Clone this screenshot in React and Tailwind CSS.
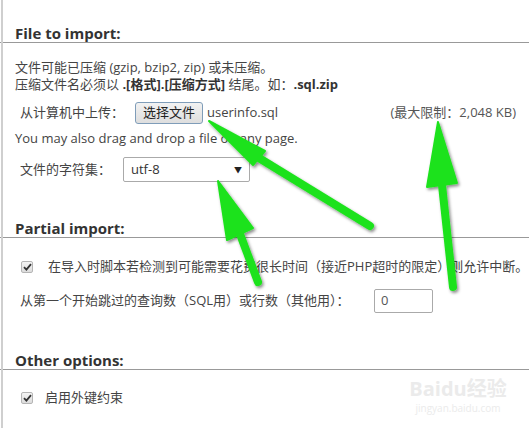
import React from 'react';

const font = { fontFamily: '"Open Sans", "Noto Sans CJK SC", sans-serif' };

const Heading = ({ children, className = '' }) => (
  <div className={`text-[15px] leading-[17px] font-bold text-[#333] border-b border-[#999] pl-[15px] ${className}`}>
    {children}
  </div>
);

const Check = () => (
  <span className="w-[12px] h-[12px] border border-[#b5b5b5] rounded-[2px] bg-gradient-to-b from-[#f4f4f4] to-[#dcdcdc] flex items-center justify-center shrink-0">
    <svg width="9" height="8" viewBox="0 0 9 8">
      <path d="M1 4.2 L3.4 6.6 L8 1.2" fill="none" stroke="#333" strokeWidth="1.8" />
    </svg>
  </span>
);

const Arrow = ({ tip, left, right, end }) => {
  const base = [(left[0] + right[0]) / 2, (left[1] + right[1]) / 2];
  return (
    <g>
      <line x1={base[0]} y1={base[1]} x2={end[0]} y2={end[1]} stroke="#1de21d" strokeWidth="8" strokeLinecap="round" />
      <polygon
        points={`${tip[0]},${tip[1]} ${left[0]},${left[1]} ${right[0]},${right[1]}`}
        fill="#1de21d"
        stroke="#1de21d"
        strokeWidth="2"
        strokeLinejoin="round"
      />
    </g>
  );
};

export default function App() {
  return (
    <div className="relative w-[529px] h-[428px] overflow-hidden bg-white text-[13px] text-[#444]" style={font}>
      <div className="absolute left-[1px] top-0 bottom-0 w-[2px] bg-[#cfcfcf]" />

      <Heading className="mt-[25px]">File to import:</Heading>

      <div className="pl-[15px] mt-[16px] leading-[17px]">
        <div>文件可能已压缩 (gzip, bzip2, zip) 或未压缩。</div>
        <div>
          压缩文件名必须以 <b className="text-[#333]">.[格式].[压缩方式]</b> 结尾。如：<b className="text-[#333]">.sql.zip</b>
        </div>
      </div>

      <div className="flex items-center h-[24px] mt-[8px] pl-[20px] pr-[13px]">
        <span className="w-[115px]">从计算机中上传：</span>
        <span className="w-[68px] h-[22px] border border-[#7f9db9] rounded-[3px] bg-gradient-to-b from-[#f2f2f2] to-[#dedede] flex items-center justify-center text-[#222]">
          选择文件
        </span>
        <span className="ml-[4px]">userinfo.sql</span>
        <span className="ml-auto text-[#555]">(最大限制：2,048 KB)</span>
      </div>

      <div className="pl-[15px] mt-[5px] leading-[17px]">You may also drag and drop a file on any page.</div>

      <div className="flex items-center h-[25px] mt-[10px] pl-[20px]">
        <span className="w-[103px]">文件的字符集：</span>
        <span className="w-[127px] h-[25px] border border-[#aaa] rounded-[2px] flex items-center pl-[7px] pr-[7px]">
          <span className="text-[#333]">utf-8</span>
          <span className="ml-auto text-[8px] text-[#222]">▼</span>
        </span>
      </div>

      <Heading className="mt-[38px]">Partial import:</Heading>

      <div className="flex items-center h-[17px] mt-[20px] pl-[21px]">
        <Check />
        <span className="ml-[15px] whitespace-nowrap">在导入时脚本若检测到可能需要花费很长时间（接近PHP超时的限定）则允许中断。</span>
      </div>

      <div className="flex items-center h-[24px] mt-[14px] pl-[20px]">
        <span className="w-[354px] whitespace-nowrap">从第一个开始跳过的查询数（SQL用）或行数（其他用）：</span>
        <span className="w-[59px] h-[24px] border border-[#aaa] rounded-[2px] flex items-center pl-[6px] text-[#555]">0</span>
      </div>

      <Heading className="mt-[39px]">Other options:</Heading>

      <div className="flex items-center h-[17px] mt-[19px] pl-[21px]">
        <Check />
        <span className="ml-[12px]">启用外键约束</span>
      </div>

      <div className="absolute left-[408px] top-[378px] w-[100px] text-[#ebebeb] select-none flex flex-col items-center gap-[3px]">
        <div className="text-[20px] leading-[22px] font-bold">Baidu经验</div>
        <div className="text-[10px] leading-[11px]">jingyan.baidu.com</div>
      </div>

      <svg className="absolute inset-0 pointer-events-none" width="529" height="428">
        <defs>
          <filter id="sh" x="-20%" y="-20%" width="140%" height="140%">
            <feDropShadow dx="1.5" dy="2" stdDeviation="1.5" floodColor="#000" floodOpacity="0.45" />
          </filter>
        </defs>
        <g filter="url(#sh)">
          <Arrow tip={[209, 121]} left={[253, 165]} right={[265, 151]} end={[370, 226]} />
          <Arrow tip={[218, 181]} left={[227, 240]} right={[253, 228]} end={[258, 282]} />
          <Arrow tip={[438, 122]} left={[427, 187]} right={[457, 183]} end={[453, 287]} />
        </g>
      </svg>
    </div>
  );
}
